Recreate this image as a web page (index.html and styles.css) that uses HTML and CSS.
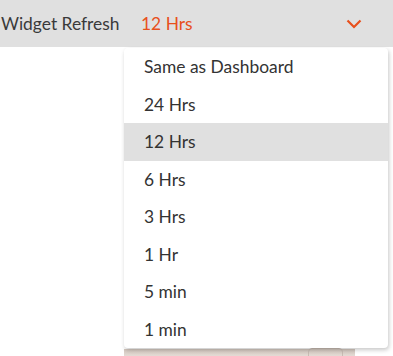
FILE: index.html
```html
<!DOCTYPE html>
<html>
<head>
<meta charset="utf-8">
<link rel="stylesheet" href="styles.css">
</head>
<body>
<div class="page">
  <div class="header">
    <span class="label">Widget Refresh</span>
    <span class="value">12 Hrs</span>
    <svg class="chevron" width="16" height="10" viewBox="0 0 16 10"><path d="M1.5 1.5 L8 8 L14.5 1.5" fill="none" stroke="#e8501c" stroke-width="2.2"/></svg>
  </div>
  <div class="content">
    <div class="behind"><div class="behind-btn"></div></div>
  </div>
  <ul class="menu">
    <li>Same as Dashboard</li>
    <li>24 Hrs</li>
    <li class="active">12 Hrs</li>
    <li>6 Hrs</li>
    <li>3 Hrs</li>
    <li>1 Hr</li>
    <li>5 min</li>
    <li>1 min</li>
  </ul>
</div>
</body>
</html>
```
FILE: styles.css
```css
html, body { margin: 0; padding: 0; background: #fff; }
body { font-family: Lato, "Noto Sans", sans-serif; color: #333; }
.page { position: relative; width: 393px; height: 356px; overflow: hidden; }
.header {
  height: 47px;
  background: #e0e0e0;
  display: flex;
  align-items: center;
  font-size: 17.4px;
}
.label { padding-left: 1px; width: 140px; color: #3a3a3a; }
.value { color: #e8501c; }
.chevron { margin-left: auto; margin-right: 31px; margin-top: 1px; }
.content { padding-top: 302px; padding-left: 124px; }
.behind {
  width: 231px;
  height: 20px;
  background: linear-gradient(#d2c6bd, #ebe4df 50%, #f1ece8);
  display: flex;
  justify-content: flex-end;
  padding-right: 12px;
  box-sizing: border-box;
}
.behind-btn {
  width: 33px;
  height: 12px;
  margin-top: -1px;
  border: 1px solid #c8bcb3;
  border-radius: 4px;
}
.menu {
  position: absolute;
  top: 48px;
  left: 124px;
  width: 264px;
  margin: 0;
  padding: 0;
  list-style: none;
  background: #fff;
  border-radius: 4px;
  box-shadow: 1px 2px 4px rgba(0,0,0,0.22);
}
.menu li {
  height: 37.5px;
  display: flex;
  align-items: center;
  padding-left: 20px;
  font-size: 17.4px;
  color: #333;
}
.menu li.active { background: #e0e0e0; }
```
